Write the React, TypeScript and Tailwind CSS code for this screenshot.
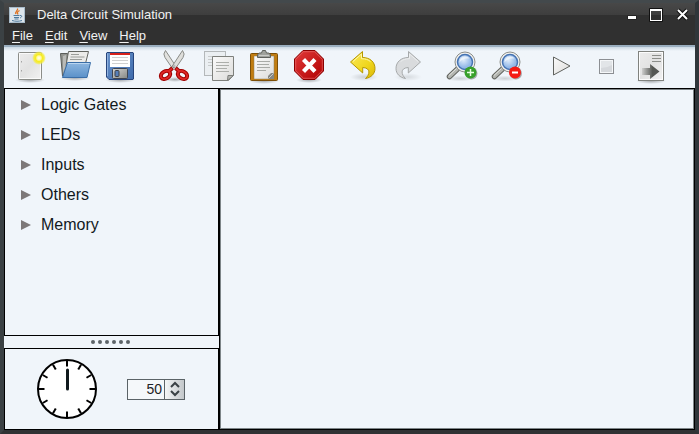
import { useState, type ReactNode } from 'react';

const Defs = () => (
  <svg className="absolute size-0" aria-hidden="true">
    <defs>
      <linearGradient id="paper" x1="0" y1="0" x2="1" y2="1">
        <stop offset="0" stopColor="#fbfbfb" />
        <stop offset="1" stopColor="#dcdcda" />
      </linearGradient>
      <linearGradient id="sheet" x1="0" y1="0" x2="1" y2="1">
        <stop offset="0" stopColor="#ececec" />
        <stop offset="0.5" stopColor="#e2e2e2" />
        <stop offset="1" stopColor="#f2f2f2" />
      </linearGradient>
      <linearGradient id="folder" x1="0" y1="0" x2="0" y2="1">
        <stop offset="0" stopColor="#8db6e0" />
        <stop offset="1" stopColor="#5b91c9" />
      </linearGradient>
      <linearGradient id="disk" x1="0" y1="0" x2="1" y2="1">
        <stop offset="0" stopColor="#6a93cb" />
        <stop offset="1" stopColor="#3e6bab" />
      </linearGradient>
      <linearGradient id="steel" x1="0" y1="0" x2="1" y2="1">
        <stop offset="0" stopColor="#d4d4d2" />
        <stop offset="1" stopColor="#858783" />
      </linearGradient>
      <linearGradient id="red" x1="0" y1="0" x2="1" y2="1">
        <stop offset="0" stopColor="#e23a3a" />
        <stop offset="1" stopColor="#b00000" />
      </linearGradient>
      <linearGradient id="yellow" x1="0" y1="0" x2="1" y2="1">
        <stop offset="0" stopColor="#fbe95c" />
        <stop offset="0.6" stopColor="#efd61c" />
        <stop offset="1" stopColor="#dcb80a" />
      </linearGradient>
      <linearGradient id="fade" x1="0" y1="0" x2="1" y2="0">
        <stop offset="0" stopColor="#555753" stopOpacity="0.15" />
        <stop offset="0.6" stopColor="#555753" />
      </linearGradient>
      <radialGradient id="sun">
        <stop offset="0" stopColor="#fffef0" />
        <stop offset="0.3" stopColor="#fff9a0" />
        <stop offset="0.5" stopColor="#f7ec20" />
        <stop offset="0.75" stopColor="#f5ec30" stopOpacity="0.8" />
        <stop offset="1" stopColor="#f6ee50" stopOpacity="0" />
      </radialGradient>
      <radialGradient id="shade">
        <stop offset="0" stopColor="#000" stopOpacity="0.3" />
        <stop offset="1" stopColor="#000" stopOpacity="0" />
      </radialGradient>
      <radialGradient id="lens" cx="0.4" cy="0.35">
        <stop offset="0" stopColor="#e2eefb" />
        <stop offset="1" stopColor="#94b9e8" />
      </radialGradient>
    </defs>
  </svg>
);

const Shade = ({ cy = 32, rx = 15 }: { cy?: number; rx?: number }) => (
  <ellipse cx="18" cy={cy} rx={rx} ry="3" fill="url(#shade)" />
);

const NewIcon = () => (
  <>
    <Shade />
    <rect x="6.5" y="4.5" width="23" height="27" rx="1" fill="url(#sheet)" stroke="#8b8d89" />
    <rect x="7.5" y="5.5" width="21" height="25" fill="none" stroke="#fafafa" />
    <path d="M9.5 13v1.5M9.5 22v1.5" stroke="#a5a5a5" />
    <circle cx="27" cy="10" r="7" fill="url(#sun)" />
  </>
);

const OpenIcon = () => (
  <>
    <Shade cy={30} />
    <path d="M3.5 5.5h7l1 2h16v8L5.5 28z" fill="#92948f" stroke="#5b5d59" />
    <path d="M6 25 6 8l3-1v10z" fill="#b9bab7" />
    <path d="M11.5 3.5h20l-3.5 14H9z" fill="#ebebe9" stroke="#62645f" />
    <path d="M14 6.5h8M13.5 9h14M13 11.5h12" stroke="#9a9c98" />
    <path d="M10.5 14.5h23L30 29.5H5.5z" fill="url(#folder)" stroke="#3a6ea8" strokeLinejoin="round" />
    <path d="M11 15.500h21.500" stroke="#b9d5f0" />
  </>
);

const SaveIcon = () => (
  <>
    <Shade cy={32} />
    <path d="M5 4.5h26l.5.5v26l-.5.5H7L4.5 29V5z" fill="url(#disk)" stroke="#27457c" />
    <path d="M5.500 28V5.500" stroke="#8fb2df" />
    <rect x="8" y="5" width="20" height="14" fill="#fff" />
    <rect x="8" y="5" width="20" height="2" fill="#d8231d" />
    <path d="M10 9.500h16M10 12.500h16M10 15.500h16" stroke="#d0d0d0" />
    <rect x="10.5" y="20.5" width="15" height="10" rx="1" fill="url(#steel)" stroke="#3f4551" />
    <rect x="13" y="22.500" width="4" height="6" rx="1" fill="#577fb8" stroke="#3c4048" />
  </>
);

const CutIcon = () => (
  <>
    <ellipse cx="19" cy="31.5" rx="10" ry="2.5" fill="url(#shade)" />
    <path d="M9.500 2.500Q6.500 6 9 9.500l7.500 11 3.500-2z" fill="#e2e2df" stroke="#8a8c88" />
    <path d="M26.500 2.500Q29.500 6 27 9.500l-7.500 11-3.500-2z" fill="#dededb" stroke="#8a8c88" />
    <g fill="none" stroke="#a00000" strokeWidth="4">
      <ellipse cx="9.500" cy="27" rx="5" ry="3.600" transform="rotate(-30 9.500 27)" />
      <ellipse cx="26.500" cy="27" rx="5" ry="3.600" transform="rotate(30 26.500 27)" />
      <path d="M12.500 23.500l4-3.500M23.500 23.500l-4-3.500" />
    </g>
    <g fill="none" stroke="#df2626" strokeWidth="2">
      <ellipse cx="9.500" cy="27" rx="5" ry="3.600" transform="rotate(-30 9.500 27)" />
      <ellipse cx="26.500" cy="27" rx="5" ry="3.600" transform="rotate(30 26.500 27)" />
      <path d="M12.500 23.500l3.500-3M23.500 23.500l-3.500-3" />
    </g>
    <circle cx="18" cy="18" r="1" fill="#eee" stroke="#777" strokeWidth="0.5" />
  </>
);

const CopyIcon = () => (
  <>
    <rect x="3.5" y="3.5" width="21" height="24" fill="#ebeff2" stroke="#b4b8ba" />
    <path d="M7 8.500h13M7 11.500h4M7 14.500h4M7 17.500h4" stroke="#c8cbcc" />
    <path d="M11.5 8.500h21v19l-5 5h-16z" fill="url(#paper)" stroke="#7e807c" />
    <path d="M15 14.500h13M15 17.500h13M15 20.500h11M15 23.500h13" stroke="#acaeaa" />
    <path d="M32.500 27.500l-6 5 .500-5z" fill="#b5b6b3" stroke="#7e807c" />
  </>
);

const PasteIcon = () => (
  <>
    <Shade cy={33} />
    <rect x="4.5" y="5.5" width="27" height="27" rx="1" fill="#c17d11" stroke="#7c4f08" />
    <rect x="8" y="8" width="20" height="23" fill="url(#paper)" stroke="#8b7c58" strokeWidth="0.5" />
    <path d="M11 13.500h13M11 16.500h12M11 19.500h13M11 22.500h9" stroke="#a8aaa6" />
    <path d="M28 25v6h-6v-3l3-3z" fill="#858783" />
    <path d="M22.500 30.500l5-5" stroke="#c9cac7" />
    <path d="M11.5 9.500v-3l2-1.500h2l1-2.500h3l1 2.500h2l2 1.500v3z" fill="#9fa19c" stroke="#5f615d" />
    <path d="M13 7.500h10" stroke="#c9cac7" />
  </>
);

const DeleteIcon = () => (
  <>
    <Shade cy={32} rx={13} />
    <path d="M12 2.500h12l8.500 8.500v12L24 31.500H12L3.500 23V11z" fill="url(#red)" stroke="#8a0000" />
    <path d="M12.500 3.700h11l7.800 7.700v11.200l-7.800 7.700h-11l-7.800-7.700V11.400z" fill="none" stroke="#ee7777" strokeOpacity="0.6" />
    <path d="M12.500 11.500l11.500 12M24 11.500l-11.500 12" stroke="#fff" strokeWidth="4.200" />
  </>
);

const arrow =
  'M5.500 14 17.500 3.500v6C25 9.500 30 14 30 20.500c0 5.500-4 9-9.500 10 4-3.500 6-10.500-2.800-11v5.500z';

const UndoIcon = () => (
  <>
    <ellipse cx="19" cy="29" rx="14" ry="4" fill="url(#shade)" opacity="0.5" />
    <path d={arrow} fill="url(#yellow)" stroke="#b59700" strokeLinejoin="round" />
    <path d="M8 13.500 16.500 6v4.700c4 0 7 1 9 3" fill="none" stroke="#fff7a8" />
  </>
);

const RedoIcon = () => (
  <>
    <ellipse cx="18" cy="29" rx="14" ry="4" fill="url(#shade)" opacity="0.35" />
    <path d={arrow} transform="matrix(-1 0 0 1 36 0)" fill="#d9dbdd" stroke="#a6a9aa" strokeLinejoin="round" />
    <path d="M28 13.500 19.500 6v4.700c-4 0-7 1-9 3" fill="none" stroke="#eceeef" />
  </>
);

const Magnifier = ({ children }: { children: ReactNode }) => (
  <>
    <ellipse cx="16" cy="30.5" rx="14" ry="3" fill="url(#shade)" opacity="0.5" />
    <path d="M13.500 21 5.500 28.500" stroke="#62645f" strokeWidth="5.500" strokeLinecap="round" />
    <path d="M13.500 21 5.500 28.500" stroke="#b4b6b1" strokeWidth="3.500" strokeLinecap="round" />
    <path d="M12.500 20.500 5 27.500" stroke="#e4e5e2" />
    <circle cx="21" cy="14" r="10" fill="#f0f0ee" stroke="#8c8e8a" />
    <circle cx="21" cy="14" r="7.5" fill="url(#lens)" stroke="#4573b3" strokeWidth="1.5" />
    <path d="M15.500 14.500c0-4 2.500-6 6-6 2 0 3.500 1 4 2-5-.500-8 1-10 4z" fill="#fff" fillOpacity="0.6" />
    {children}
  </>
);

const ZoomInIcon = () => (
  <Magnifier>
    <circle cx="27.5" cy="25.5" r="6" fill="#000" fillOpacity="0.3" />
    <circle cx="26.5" cy="24.5" r="6" fill="#38a02b" />
    <path d="M26.500 21v7M23 24.500h7" stroke="#e9ffe4" strokeWidth="1.5" />
  </Magnifier>
);

const ZoomOutIcon = () => (
  <Magnifier>
    <circle cx="27" cy="25.5" r="6" fill="#000" fillOpacity="0.3" />
    <circle cx="26" cy="24.5" r="6" fill="#f51a14" />
    <path d="M23 24.500h6" stroke="#fff" strokeWidth="2" />
  </Magnifier>
);

const PlayIcon = () => (
  <path d="M10.500 9v18L27 18z" fill="url(#paper)" stroke="#60625e" strokeLinejoin="round" />
);

const StopIcon = () => (
  <>
    <rect x="11.5" y="11.5" width="14" height="14" fill="#e2e5e8" stroke="#8c8f93" />
    <rect x="12.5" y="12.5" width="12" height="12" fill="none" stroke="#f5f7f9" />
    <path d="M13 20q6 0 11-3v7H13z" fill="#d5d8dc" />
  </>
);

const StepIcon = () => (
  <>
    <Shade cy={33} />
    <rect x="5.5" y="3.5" width="25" height="29" fill="url(#sheet)" stroke="#80827e" />
    <rect x="6.5" y="4.5" width="23" height="27" fill="none" stroke="#fcfcfc" />
    <path d="M19 7.500h9M19 10.500h9M19 13.500h9" stroke="#8c8e8a" />
    <path d="M9 20h8v-4l9.500 7.500L17 31v-4H9z" fill="url(#fade)" />
  </>
);

const toolGroups = [
  [
    { name: 'New', Icon: NewIcon },
    { name: 'Open', Icon: OpenIcon },
    { name: 'Save', Icon: SaveIcon },
  ],
  [
    { name: 'Cut', Icon: CutIcon },
    { name: 'Copy', Icon: CopyIcon },
    { name: 'Paste', Icon: PasteIcon },
    { name: 'Delete', Icon: DeleteIcon },
  ],
  [
    { name: 'Undo', Icon: UndoIcon },
    { name: 'Redo', Icon: RedoIcon },
  ],
  [
    { name: 'Zoom in', Icon: ZoomInIcon },
    { name: 'Zoom out', Icon: ZoomOutIcon },
  ],
  [
    { name: 'Run', Icon: PlayIcon },
    { name: 'Stop', Icon: StopIcon },
    { name: 'Step', Icon: StepIcon },
  ],
];

const categories = ['Logic Gates', 'LEDs', 'Inputs', 'Others', 'Memory'];

const TitleBar = () => (
  <header className="flex h-6 items-center bg-linear-to-b from-[#484848] from-0% via-[#3e3e3e] via-50% to-[#303030] to-50% pr-1 pl-[5px]">
    <svg className="size-4 shrink-0" viewBox="0 0 16 16" aria-hidden="true">
      <rect width="16" height="16" fill="#dce5ec" />
      <rect x="0.5" y="0.5" width="15" height="15" fill="none" stroke="#a9bccb" />
      <path d="M8.500 1.500c1 2-3 3-1.500 5.500M10.500 3.500C8 5 8 5.500 9 7.500" fill="none" stroke="#e0701c" strokeWidth="1.3" />
      <path d="M4.500 8.500h6M5 10.500h5M5.500 12h4M3 13.500c3 1 7 1 10 0M11 8.500c2-.500 2.500 1.500 0 2.500" fill="none" stroke="#4f7a9d" />
    </svg>
    <h1 className="ml-3 min-w-0 flex-1 truncate text-[13px] leading-4 text-[#f2f2f2]">Delta Circuit Simulation</h1>
    <div className="flex gap-3">
      <button type="button" aria-label="Minimize">
        <svg className="h-4 w-2.5" viewBox="0 0 10 16">
          <rect x="0.5" y="8.5" width="9" height="4" fill="#151515" />
          <rect x="1" y="9" width="8" height="3" fill="#fff" />
        </svg>
      </button>
      <button type="button" aria-label="Maximize">
        <svg className="h-4 w-3.5" viewBox="0 0 14 16">
          <path d="M.5 1.500h13v13H.5z" fill="none" stroke="#111" />
          <path d="M1 2h12v12H1zM2 4v9h10V4z" fill="#fff" fillRule="evenodd" />
        </svg>
      </button>
      <button type="button" aria-label="Close">
        <svg className="size-4" viewBox="0 0 16 16">
          <path d="M3 3l9 9M12 3l-9 9" stroke="#111" strokeWidth="4" />
          <path d="M3 3l9 9M12 3l-9 9" stroke="#fff" strokeWidth="2" />
        </svg>
      </button>
    </div>
  </header>
);

const MenuBar = () => (
  <nav className="flex h-[18px] items-center gap-3 bg-[#303030] px-2 text-[13px] leading-4 text-[#f2f2f2]">
    {['File', 'Edit', 'View', 'Help'].map((item) => (
      <button key={item} type="button">
        <span className="underline underline-offset-2">{item[0]}</span>
        {item.slice(1)}
      </button>
    ))}
  </nav>
);

const Toolbar = () => (
  <div
    role="toolbar"
    aria-label="Main tools"
    className="flex h-[43px] items-start gap-[18px] border-t-2 border-[#9aaebf] bg-linear-to-b from-[#cbd8e3] to-[#f0f5fa] to-[4px] px-2 pt-px"
  >
    {toolGroups.map((group) => (
      <div key={group[0].name} className="flex gap-[9px]">
        {group.map(({ name, Icon }) => (
          <button key={name} type="button" aria-label={name}>
            <svg className="size-9" viewBox="0 0 36 36">
              <Icon />
            </svg>
          </button>
        ))}
      </div>
    ))}
  </div>
);

const Clock = () => (
  <svg className="size-16" viewBox="0 0 64 64" role="img" aria-label="Clock">
    <circle cx="32" cy="32" r="29" fill="#fff" stroke="#000" strokeWidth="2" />
    {Array.from({ length: 12 }, (_, hour) => (
      <path key={hour} d="M32 4v5.500" stroke="#000" strokeWidth="2" transform={`rotate(${hour * 30} 32 32)`} />
    ))}
    <path d="M32.500 13v19" stroke="#10191d" strokeWidth="3" strokeLinecap="round" />
  </svg>
);

const SpeedSpinner = () => {
  const [speed, setSpeed] = useState(50);
  return (
    <div className="flex h-[21px] w-[58px] border border-[#5b6367] bg-[#f5f8fa]">
      <input
        type="text"
        inputMode="numeric"
        aria-label="Clock speed"
        value={speed}
        onChange={(event) => setSpeed(Number(event.target.value) || 0)}
        className="min-w-0 flex-1 bg-transparent pr-0.5 text-right text-[14px] leading-4 text-[#1c2124] outline-none"
      />
      <div className="flex w-5 flex-col border-l border-[#5b6367] bg-linear-to-r from-[#f5f7f8] to-[#c3c7ca]">
        <button type="button" aria-label="Increase speed" className="flex flex-1 items-end justify-center" onClick={() => setSpeed(speed + 1)}>
          <svg className="h-2 w-2.5" viewBox="0 0 10 8">
            <path d="M1 6l4-4 4 4" fill="none" stroke="#3a4145" strokeWidth="2" />
          </svg>
        </button>
        <button type="button" aria-label="Decrease speed" className="flex flex-1 items-start justify-center" onClick={() => setSpeed(speed - 1)}>
          <svg className="h-2 w-2.5" viewBox="0 0 10 8">
            <path d="M1 2l4 4 4-4" fill="none" stroke="#3a4145" strokeWidth="2" />
          </svg>
        </button>
      </div>
    </div>
  );
};

const Sidebar = () => (
  <aside className="flex w-[215px] shrink-0 flex-col">
    <ul className="flex-1 border border-black pt-px">
      {categories.map((category) => (
        <li key={category}>
          <button type="button" className="flex h-[30px] w-full items-center gap-2.5 pl-4 text-[16px] leading-5 text-[#12191d]">
            <svg className="h-2.5 w-2.5" viewBox="0 0 10 10" aria-hidden="true">
              <path d="M0 0l10 5-10 5z" fill="#7d7878" />
            </svg>
            {category}
          </button>
        </li>
      ))}
    </ul>
    <div role="separator" className="flex h-3 items-center justify-center gap-[3px] pr-0.5">
      {Array.from({ length: 6 }, (_, dot) => (
        <span key={dot} className="size-1 rounded-full bg-[#5d6468]" />
      ))}
    </div>
    <div className="flex h-[82px] items-center gap-7 border border-black pl-[30px]">
      <Clock />
      <SpeedSpinner />
    </div>
  </aside>
);

export default function App() {
  return (
    <div className="flex h-screen flex-col border-4 border-t-[3px] border-t-[#43494c] border-r-[#30363a] border-b-[#303234] border-l-[#3b4144] bg-[#f0f5fa] font-['Liberation_Sans',Arial,sans-serif]">
      <Defs />
      <TitleBar />
      <MenuBar />
      <Toolbar />
      <div className="flex min-h-0 flex-1">
        <Sidebar />
        <main className="min-w-0 flex-1 border border-black">
          <div className="h-full border border-[#7e8588]" aria-label="Circuit canvas" />
        </main>
      </div>
    </div>
  );
}
